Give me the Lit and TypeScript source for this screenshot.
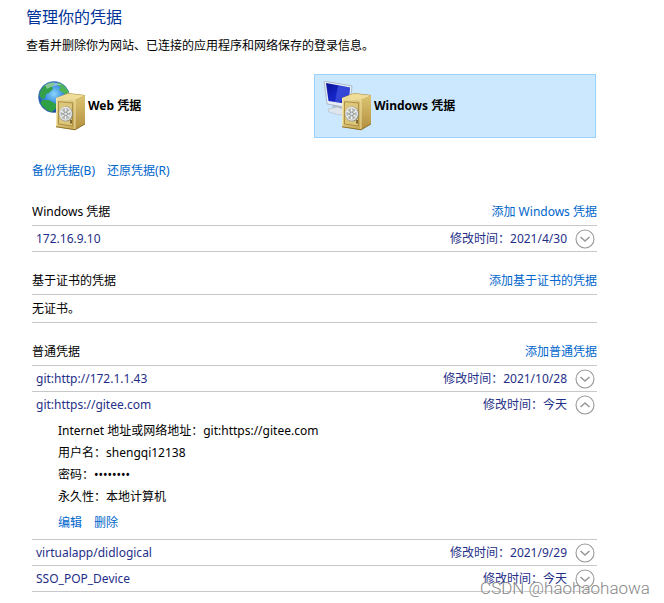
import { LitElement, html, css, svg, nothing } from "lit";
import { customElement, property } from "lit/decorators.js";

const shared = css`
  * { box-sizing: border-box; }
  a { color: #0066cc; text-decoration: none; }
  h1, h2, p, dl, dd, dt { margin: 0; font: inherit; }
`;

const safe = svg`
  <path d="M19 17 L31 12 L48 14 L48 43 L38 49 L19 46 Z" fill="#a98a3a"/>
  <path d="M19 17 L31 12.5 L48 14.5 L38 19 Z" fill="#efdc98"/>
  <path d="M38 19 L48 14.5 L48 42.5 L38 48.5 Z" fill="url(#side)"/>
  <path d="M19 17 L38 19 L38 48.5 L19 45.5 Z" fill="url(#front)"/>
  <path d="M21.5 20.5 L35.5 22 L35.5 45 L21.5 43 Z" fill="#dcc67c" stroke="#a18336" stroke-width=".8"/>
  <path d="M19.5 45 V17.5 L38 19.3 V48" fill="none" stroke="#f7ebb4" stroke-width=".8"/>
  <path d="M19 45.8 L38 48.8 L48 43" fill="none" stroke="#846720" stroke-width=".8"/>
  <ellipse cx="29" cy="33" rx="7" ry="7.6" fill="#8b8a80"/>
  <ellipse cx="28.6" cy="32.8" rx="5.8" ry="6.4" fill="#b4b6b4" stroke="#e8eaea" stroke-width="1.2"/>
  <path d="M28.6 27.5 V38 M24 30 L33.4 35.8 M33.4 30 L24 35.8" stroke="#f2f4f4" stroke-width="1.3"/>
  <circle cx="28.6" cy="32.9" r="1.9" fill="#dfe2e2" stroke="#7d8183" stroke-width=".8"/>
  <path d="M34 39 V42.5" stroke="#5d4a18" stroke-width="1.5"/>
`;

const defs = svg`
  <defs>
    <linearGradient id="front" x1="0" y1="0" x2="1" y2="1">
      <stop offset="0" stop-color="#ecdc98"/><stop offset="1" stop-color="#c6a752"/>
    </linearGradient>
    <linearGradient id="side" x1="0" y1="0" x2="0" y2="1">
      <stop offset="0" stop-color="#dcc472"/><stop offset="1" stop-color="#b39040"/>
    </linearGradient>
    <radialGradient id="sea" cx=".5" cy=".4" r=".6">
      <stop offset="0" stop-color="#8ad4fb"/><stop offset=".5" stop-color="#3a8fe0"/><stop offset="1" stop-color="#1a469c"/>
    </radialGradient>
    <linearGradient id="screen" x1="0" y1="0" x2="1" y2="1">
      <stop offset="0" stop-color="#0a1296"/><stop offset=".5" stop-color="#1626c8"/><stop offset="1" stop-color="#0c18a4"/>
    </linearGradient>
  </defs>
`;

const globe = svg`
  <circle cx="17" cy="16" r="15.5" fill="url(#sea)" stroke="#3a6cb4" stroke-width=".6"/>
  <path d="M4 9 Q8 2 15 1.5 L18 3 L15 6 L16 8 L12 12 L9 13 L8 17 L5 18 L2.5 15 Q2 12 4 9 Z" fill="#35a04a"/>
  <path d="M21 1.5 Q29 4 32 12 L29 14 L25 11 L22 9 L24 6 L20 4 Z" fill="#4fb453"/>
  <path d="M5 19 L12 19 L19 23 L19 27 L15 31 Q7 29 3.5 22 Z" fill="#2fa043"/>
  <path d="M8 4 Q16 -1 25 4 Q16 4 10 8 Z" fill="#fff" opacity=".4"/>
`;

const monitor = svg`
  <path d="M10 22 L20 24 L21 30 L9 29 Z" fill="#b4becb"/>
  <path d="M5 28 L14 26 L22 29 L22 33 L16 34 L6 31 Z" fill="#dfe5ec" stroke="#b1bcc8" stroke-width=".6"/>
  <path d="M1 0 L29 5 L27 27 L4 23 Z" fill="#e6edf4" stroke="#9fb0c3" stroke-width=".8"/>
  <path d="M3 2 L27 6.5 L25.5 23 L5.5 20 Z" fill="url(#screen)"/>
  <path d="M15 4.5 L27 6.5 L26 15 L16 21.5 L12 21 Z" fill="#5e74f0" opacity=".45"/>
`;

@customElement("vault-tile")
export class VaultTile extends LitElement {
  @property() kind = "web";
  @property() label = "";
  @property({ type: Boolean }) selected = false;

  static styles = [shared, css`
    :host { display: block; }
    .tile {
      display: flex; align-items: center; gap: 1px; width: 100%; height: 64px;
      padding: 0 8px; border: 1px solid transparent; background: none;
      font: bold 12px/20px "Noto Sans", "Noto Sans CJK SC", sans-serif;
      color: #000; text-align: left;
    }
    .selected { background: #cce8ff; border-color: #99d1ff; }
    svg { width: 50px; height: 50px; flex: none; }
  `];

  render() {
    return html`<button class="tile ${this.selected ? "selected" : ""}" aria-pressed=${this.selected}>
      <svg viewBox="0 0 50 50" aria-hidden="true">${defs}${this.kind === "web" ? globe : monitor}${safe}</svg>
      <span>${this.label}</span>
    </button>`;
  }
}

@customElement("credential-row")
export class CredentialRow extends LitElement {
  @property() name = "";
  @property() modified = "";
  @property({ attribute: false }) details: [string, string][] | null = null;

  static styles = [shared, css`
    :host { display: block; border-bottom: 1px solid #c8c8c8; }
    .head { display: flex; align-items: center; height: 25px; padding: 0 2px 0 4px; color: #1f2f87; }
    .name { flex: 1; }
    .toggle { display: flex; margin-left: 8px; padding: 0; border: 0; background: none; }
    svg { width: 20px; height: 20px; fill: none; stroke: #999; }
    .details { padding: 3px 26px 5px; color: #000; }
    .field { display: flex; height: 22px; align-items: center; }
    .actions { display: flex; gap: 12px; height: 22px; align-items: center; margin-top: 4px; }
  `];

  render() {
    const open = this.details !== null;
    return html`
      <div class="head">
        <span class="name">${this.name}</span>
        <span>修改时间：${this.modified}</span>
        <button class="toggle" aria-label=${open ? "收起" : "展开"} aria-expanded=${open}>
          <svg viewBox="0 0 20 20">
            <circle cx="10" cy="10" r="9" stroke-width="1.1"/>
            <path d=${open ? "M5.5 12 L10 8 L14.5 12" : "M5.5 8 L10 12 L14.5 8"} stroke-width="1.6"/>
          </svg>
        </button>
      </div>
      ${this.details ? html`<div class="details">
        <dl>${this.details.map(([k, v]) => html`<div class="field"><dt>${k}：</dt><dd>${v}</dd></div>`)}</dl>
        <div class="actions"><a href="#edit">编辑</a><a href="#remove">删除</a></div>
      </div>` : nothing}
    `;
  }
}

interface Credential { name: string; modified: string; details?: [string, string][]; }
interface Group { title: string; add: string; empty?: string; items: Credential[]; }

const groups: Group[] = [
  { title: "Windows 凭据", add: "添加 Windows 凭据", items: [{ name: "172.16.9.10", modified: "2021/4/30" }] },
  { title: "基于证书的凭据", add: "添加基于证书的凭据", empty: "无证书。", items: [] },
  {
    title: "普通凭据", add: "添加普通凭据", items: [
      { name: "git:http://172.1.1.43", modified: "2021/10/28" },
      {
        name: "git:https://gitee.com", modified: "今天", details: [
          ["Internet 地址或网络地址", "git:https://gitee.com"],
          ["用户名", "shengqi12138"],
          ["密码", "••••••••"],
          ["永久性", "本地计算机"],
        ],
      },
      { name: "virtualapp/didlogical", modified: "2021/9/29" },
      { name: "SSO_POP_Device", modified: "今天" },
    ],
  },
];

@customElement("app-root")
export class AppRoot extends LitElement {
  static styles = [shared, css`
    :host {
      display: block; position: relative; min-height: 100vh; padding: 5px 67px 11px 26px;
      box-sizing: border-box; background: #fff; color: #000;
      font: 12px/20px "Noto Sans", "Noto Sans CJK SC", sans-serif;
    }
    h1 { font-size: 16px; line-height: 24px; color: #003399; }
    .intro { margin-top: 7px; }
    .tiles { display: grid; grid-template-columns: 1fr 1fr; gap: 4px; margin: 18px 1px 0 2px; }
    .content { padding-left: 6px; }
    .links { display: flex; gap: 12px; margin-top: 23px; }
    .group-head {
      display: flex; justify-content: space-between; align-items: center;
      height: 28px; margin-top: 15px; border-bottom: 1px solid #c8c8c8;
    }
    .first { margin-top: 17px; }
    .empty { height: 28px; line-height: 27px; border-bottom: 1px solid #c8c8c8; }
    .watermark {
      position: absolute; right: 14px; bottom: 5px; font: 300 17px/20px Roboto, sans-serif;
      color: #888; text-shadow: 1px 1px 0 #fff;
    }
  `];

  render() {
    return html`
      <h1>管理你的凭据</h1>
      <p class="intro">查看并删除你为网站、已连接的应用程序和网络保存的登录信息。</p>
      <div class="tiles">
        <vault-tile kind="web" label="Web 凭据"></vault-tile>
        <vault-tile kind="windows" label="Windows 凭据" selected></vault-tile>
      </div>
      <div class="content">
        <nav class="links"><a href="#backup">备份凭据(B)</a><a href="#restore">还原凭据(R)</a></nav>
        ${groups.map((g, i) => html`<section>
          <div class="group-head ${i === 0 ? "first" : ""}"><h2>${g.title}</h2><a href="#add">${g.add}</a></div>
          ${g.empty ? html`<p class="empty">${g.empty}</p>` : nothing}
          ${g.items.map((c) => html`<credential-row .name=${c.name} .modified=${c.modified} .details=${c.details ?? null}></credential-row>`)}
        </section>`)}
      </div>
      <div class="watermark">CSDN @haohaohaowa</div>
    `;
  }
}
